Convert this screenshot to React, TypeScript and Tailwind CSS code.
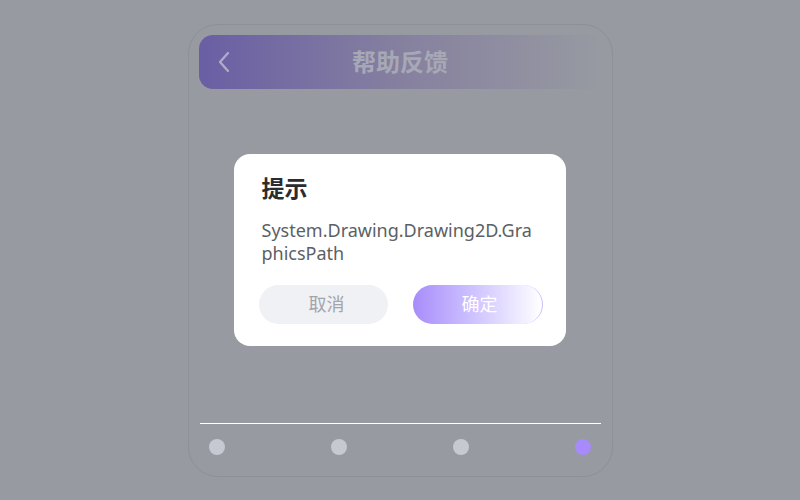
import React from 'react';

const DOTS = [false, false, false, true];

export default function App() {
  return (
    <div
      className="flex h-[500px] w-[800px] items-start justify-center bg-[#979aa1] pt-[24px]"
      style={{ fontFamily: '"Noto Sans", "Noto Sans CJK SC", sans-serif' }}
    >
      <div className="relative flex h-[453px] w-[425px] flex-col rounded-[30px] border border-[#8d9097] px-[10px] pt-[10px]">
        {/* header */}
        <div className="relative flex h-[54px] items-center rounded-[14px] bg-gradient-to-r from-[#6a5ea4] via-[#86809f] to-[#979aa1]">
          <svg
            className="ml-[18px]"
            width="14"
            height="22"
            viewBox="0 0 14 22"
            fill="none"
            stroke="#aeaccb"
            strokeWidth="2.3"
            strokeLinecap="round"
            strokeLinejoin="round"
          >
            <path d="M11 2 L3 11 L11 20" />
          </svg>
          <div className="absolute inset-0 flex items-center justify-center text-[24px] font-bold text-[#a6a8b6]">
            帮助反馈
          </div>
        </div>

        <div className="flex-1" />

        {/* bottom nav */}
        <div className="mx-px h-px bg-white" />
        <div className="flex items-center justify-between px-[10px] pb-[21px] pt-[15px]">
          {DOTS.map((active, i) => (
            <span
              key={i}
              className={
                active
                  ? 'h-[16px] w-[16px] rounded-full bg-[#a78bfa]'
                  : 'h-[16px] w-[16px] rounded-full bg-[#c6c9d1]'
              }
            />
          ))}
        </div>

        {/* dialog */}
        <div className="absolute left-[45px] top-[129px] w-[332px] rounded-[16px] bg-white pb-[22px] pl-[28px] pr-[32px] pt-[19px]">
          <div className="text-[23px] font-bold leading-[30px] text-[#2a2c30]">提示</div>
          <div className="mt-[16px] break-all text-[18px] leading-[23px] text-[#5c5f65]">
            System.Drawing.Drawing2D.GraphicsPath
          </div>
          <div className="-ml-[3px] mt-[20px] flex gap-[25px]">
            <button className="flex h-[39px] w-[129px] shrink-0 items-center justify-center rounded-full bg-[#f0f1f4] pl-[7px] text-[18px] text-[#a3a5ab]">
              取消
            </button>
            <button className="flex h-[39px] w-[130px] shrink-0 items-center justify-center rounded-full border-r-[1.5px] border-[#cdbefc] bg-gradient-to-r from-[#a88cfa] to-[#ffffff] pl-[5px] text-[18px] text-white">
              确定
            </button>
          </div>
        </div>
      </div>
    </div>
  );
}
